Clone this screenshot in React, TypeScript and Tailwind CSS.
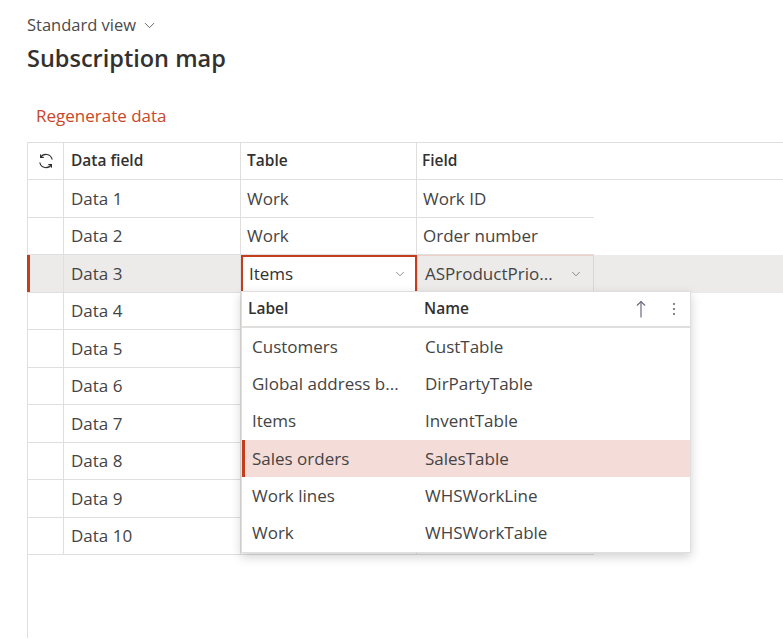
import { ChevronDown } from "lucide-react";

const font = { fontFamily: '"Open Sans", "Noto Sans", Arial, sans-serif' };

const rows = [
  { field: "Data 1", table: "Work", col: "Work ID" },
  { field: "Data 2", table: "Work", col: "Order number" },
  { field: "Data 3", table: "Items", col: "ASProductPrio..." },
  { field: "Data 4" },
  { field: "Data 5" },
  { field: "Data 6" },
  { field: "Data 7" },
  { field: "Data 8" },
  { field: "Data 9" },
  { field: "Data 10" },
];

const options = [
  { label: "Customers", name: "CustTable" },
  { label: "Global address b...", name: "DirPartyTable" },
  { label: "Items", name: "InventTable" },
  { label: "Sales orders", name: "SalesTable", active: true },
  { label: "Work lines", name: "WHSWorkLine" },
  { label: "Work", name: "WHSWorkTable" },
];

const SyncIcon = () => (
  <svg width="18" height="18" viewBox="0 0 16 16" fill="none" stroke="#323130" strokeWidth="1" strokeLinecap="round">
    <path d="M13.4 6.4A5.6 5.6 0 0 0 3.2 4.8" />
    <path d="M2.6 9.6A5.6 5.6 0 0 0 12.8 11.2" />
    <path d="M3.2 2.4V4.8H5.6" />
    <path d="M12.8 13.6V11.2H10.4" />
  </svg>
);

const UpArrow = () => (
  <svg width="10" height="18" viewBox="0 0 10 18" fill="none" stroke="#6b6a80" strokeWidth="1.2" strokeLinecap="round">
    <path d="M5 1.5V17" />
    <path d="M1.2 5.2L5 1.5L8.8 5.2" />
  </svg>
);

const Dots = () => (
  <div className="flex flex-col items-center gap-[3px]">
    <span className="w-[2px] h-[2px] rounded-full bg-[#605e5c]" />
    <span className="w-[2px] h-[2px] rounded-full bg-[#605e5c]" />
    <span className="w-[2px] h-[2px] rounded-full bg-[#605e5c]" />
  </div>
);

export default function App() {
  return (
    <div className="w-[783px] h-[639px] overflow-hidden bg-white text-[#323130]" style={font}>
      <div className="pl-[27px] pt-[14px]">
        <div className="flex items-center gap-[5px] text-[16.5px] leading-[22px] text-[#4a4a4a]">
          Standard view
          <ChevronDown size={17} strokeWidth={1.2} className="text-[#4a4a4a]" />
        </div>
        <div className="mt-[6px] text-[23.5px] leading-[32px] font-semibold text-[#323130]">Subscription map</div>
        <div className="mt-[31px] ml-[9px] text-[17px] leading-[22px] text-[#c8472a]">Regenerate data</div>
      </div>

      <div className="relative ml-[27px] mt-[15px] h-[496px] border-l border-t border-[#e1dfdd]">
        {/* header */}
        <div className="flex h-[37px] border-b border-[#e1dfdd] text-[15.5px] font-semibold text-[#323130]">
          <div className="w-[36px] flex items-center justify-center border-r border-[#e1dfdd]">
            <SyncIcon />
          </div>
          <div className="w-[177px] flex items-center pl-[7px] border-r border-[#e1dfdd]">Data field</div>
          <div className="w-[176px] flex items-center pl-[6px] border-r border-[#e1dfdd]">Table</div>
          <div className="flex-1 flex items-center pl-[5px]">Field</div>
        </div>

        {/* rows */}
        {rows.map((r, i) => {
          const selected = i === 2;
          return (
            <div key={r.field} className={`flex h-[37.5px] text-[17px] ${selected ? "bg-[#edebe9]" : ""}`}>
              <div className="w-[36px] relative border-r border-b border-[#e1dfdd]">
                {selected && <span className="absolute left-[-1px] top-0 bottom-0 w-[3px] bg-[#c43e1c]" />}
              </div>
              <div className="w-[177px] flex items-center pl-[7px] border-r border-b border-[#e1dfdd] text-[#444]">
                {r.field}
              </div>
              {selected ? (
                <>
                  <div className="w-[176px] flex items-center pl-[6px] pr-[8px] justify-between border-2 border-[#c43e1c] bg-white text-[#323130]">
                    Items
                    <ChevronDown size={14} strokeWidth={1.2} className="text-[#605e5c]" />
                  </div>
                  <div className="w-[177px] flex items-center pl-[7px] pr-[10px] justify-between border border-[#efd0c8] text-[#444]">
                    {r.col}
                    <ChevronDown size={14} strokeWidth={1.2} className="text-[#605e5c]" />
                  </div>
                </>
              ) : (
                <>
                  <div className="w-[176px] flex items-center pl-[6px] border-r border-b border-[#e1dfdd] text-[#444]">
                    {r.table}
                  </div>
                  <div className="w-[177px] flex items-center pl-[6px] border-b border-[#e1dfdd] text-[#444]">
                    {r.col}
                  </div>
                </>
              )}
            </div>
          );
        })}

        {/* dropdown */}
        <div className="absolute left-[213px] top-[148px] w-[450px] bg-white border border-[#e1dfdd] shadow-[0_4px_10px_rgba(0,0,0,0.18)] text-[17px]">
          <div className="flex items-center h-[36px] border-b-2 border-[#e1dfdd] text-[15.5px] font-semibold text-[#323130]">
            <div className="w-[176px] pl-[6px]">Label</div>
            <div className="flex-1 pl-[6px]">Name</div>
            <div className="w-[34px] flex justify-center">
              <UpArrow />
            </div>
            <div className="w-[32px] flex justify-center">
              <Dots />
            </div>
          </div>
          {options.map((o) => (
            <div
              key={o.name}
              className={`relative flex items-center h-[37.3px] text-[#444] ${o.active ? "bg-[#f4dcd8]" : ""}`}
            >
              {o.active && <span className="absolute left-0 top-0 bottom-0 w-[3px] bg-[#c43e1c]" />}
              <div className="w-[176px] pl-[10px]">{o.label}</div>
              <div className="flex-1 pl-[7px]">{o.name}</div>
            </div>
          ))}
        </div>
      </div>
    </div>
  );
}
